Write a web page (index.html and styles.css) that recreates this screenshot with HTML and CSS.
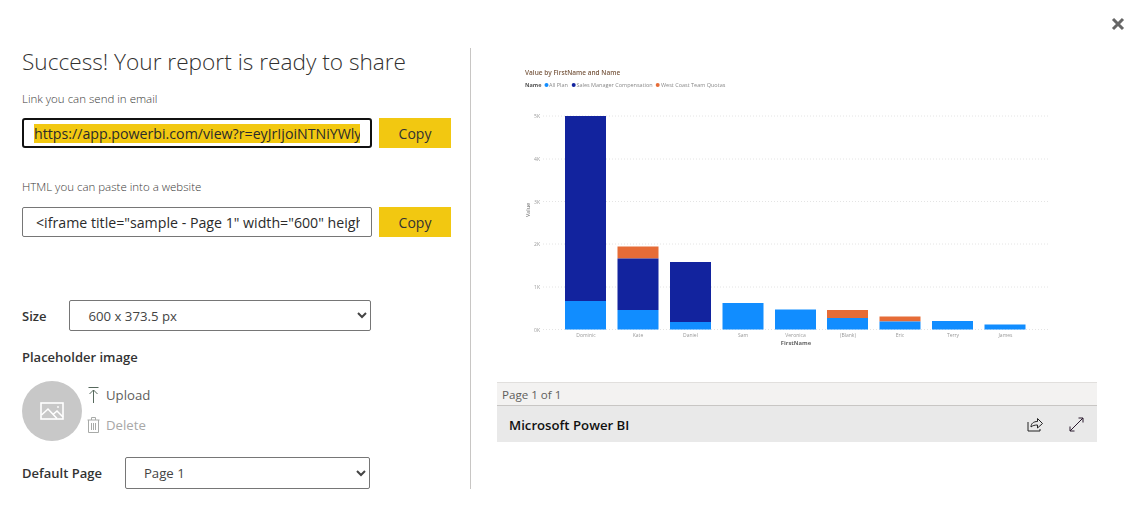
FILE: index.html
```html
<!DOCTYPE html>
<html lang="en">
<head>
    <meta charset="UTF-8">
    <meta name="viewport" content="width=device-width, initial-scale=1.0">
    <title>Share report</title>
    <link rel="stylesheet" href="styles.css">
</head>
<body>
    <button class="close" aria-label="Close">
        <svg width="14" height="14" viewBox="0 0 14 14"><path d="M2 2l10 10M12 2L2 12" stroke="#666" stroke-width="3" fill="none"/></svg>
    </button>
    <div class="dialog">
        <div class="settings">
            <h1>Success! Your report is ready to share</h1>

            <div class="field-label">Link you can send in email</div>
            <div class="copy-row">
                <div class="copy-field focused"><div class="copy-text"><span class="selected">https://app.powerbi.com/view?r=eyJrIjoiNTNiYWlyZ</span></div></div>
                <button class="copy-btn">Copy</button>
            </div>

            <div class="field-label second">HTML you can paste into a website</div>
            <div class="copy-row">
                <div class="copy-field"><div class="copy-text indent">&lt;iframe title="sample - Page 1" width="600" height</div></div>
                <button class="copy-btn">Copy</button>
            </div>

            <div class="select-row size-row">
                <label class="strong">Size</label>
                <select class="size-select"><option>600 x 373.5 px</option></select>
            </div>

            <div class="strong placeholder-title">Placeholder image</div>
            <div class="placeholder">
                <div class="avatar">
                    <svg width="24" height="18" viewBox="0 0 24 18" fill="none" stroke="#fff" stroke-width="1.6">
                        <rect x="1" y="1" width="22" height="16"/>
                        <path d="M1.500 13l6.500-6 9 9.500M13.500 12l3.500-3 6 6"/>
                        <circle cx="18" cy="5" r="0.9" fill="#fff" stroke="none"/>
                    </svg>
                </div>
                <div class="placeholder-actions">
                    <div class="action">
                        <svg width="11" height="17" viewBox="0 0 11 17" fill="none" stroke="#56695d" stroke-width="1"><path d="M.5 .5h10M5.500 16V3M1.500 7l4-4 4 4"/></svg>
                        <span>Upload</span>
                    </div>
                    <div class="action disabled">
                        <svg width="13" height="16" viewBox="0 0 13 16" fill="none" stroke="#a8aaa8" stroke-width="1"><path d="M.5 3h12M4.500 3V.5h4V3M1.500 3v12.500h10V3M4.500 6v7M6.500 6v7M8.500 6v7"/></svg>
                        <span>Delete</span>
                    </div>
                </div>
            </div>

            <div class="select-row page-row">
                <label class="strong">Default Page</label>
                <select class="page-select"><option>Page 1</option></select>
            </div>
        </div>

        <div class="preview">
            <svg class="chart" viewBox="497 60 600 322" width="600" height="322">
                <text class="chart-title" x="525" y="75">Value by FirstName and Name</text>
                <text class="legend-name" x="525" y="87">Name</text>
                <circle cx="546.500" cy="85" r="2" fill="#118dff"/>
                <text class="legend" x="549" y="87">All Plan</text>
                <circle cx="573.700" cy="85" r="2" fill="#12239e"/>
                <text class="legend" x="576.500" y="87">Sales Manager Compensation</text>
                <circle cx="657.700" cy="85" r="2" fill="#e66c37"/>
                <text class="legend" x="661" y="87">West Coast Team Quotas</text>

                <g class="grid">
                    <path d="M543 116H1048M543 159H1048M543 201.500H1048M543 244H1048M543 287H1048M543 329.500H1048"/>
                </g>
                <g class="axis">
                    <text x="540" y="118">5K</text>
                    <text x="540" y="161">4K</text>
                    <text x="540" y="204">3K</text>
                    <text x="540" y="246">2K</text>
                    <text x="540" y="289">1K</text>
                    <text x="540" y="332">0K</text>
                </g>
                <text class="axis-title" transform="translate(529.500 210) rotate(-90)">Value</text>

                <g class="bars">
                    <rect class="navy" x="565" y="116" width="41" height="185"/>
                    <rect class="blue" x="565" y="301" width="41" height="28.500"/>
                    <rect class="orange" x="617.500" y="246.500" width="41" height="12"/>
                    <rect class="navy" x="617.500" y="258.500" width="41" height="51.500"/>
                    <rect class="blue" x="617.500" y="310" width="41" height="19.500"/>
                    <rect class="navy" x="670" y="262" width="41" height="60"/>
                    <rect class="blue" x="670" y="322" width="41" height="7.500"/>
                    <rect class="blue" x="722.500" y="303" width="41" height="26.500"/>
                    <rect class="blue" x="775" y="309.500" width="41" height="20"/>
                    <rect class="orange" x="827" y="310" width="41" height="8"/>
                    <rect class="blue" x="827" y="318" width="41" height="11.500"/>
                    <rect class="orange" x="879.500" y="316.500" width="41" height="5"/>
                    <rect class="blue" x="879.500" y="321.500" width="41" height="8"/>
                    <rect class="blue" x="932" y="321" width="41" height="8.500"/>
                    <rect class="blue" x="984.500" y="324.500" width="41" height="5"/>
                </g>
                <g class="names">
                    <text x="586" y="337">Dominic</text>
                    <text x="638" y="337">Kate</text>
                    <text x="690.500" y="337">Daniel</text>
                    <text x="743" y="337">Sam</text>
                    <text x="795.500" y="337">Veronica</text>
                    <text x="848" y="337">(Blank)</text>
                    <text x="900" y="337">Eric</text>
                    <text x="953" y="337">Terry</text>
                    <text x="1005.500" y="337">James</text>
                </g>
                <text class="axis-name" x="796" y="345">FirstName</text>
            </svg>
            <div class="pager">Page 1 of 1</div>
            <div class="brand-bar">
                <span class="brand">Microsoft Power BI</span>
                <svg class="share" width="17" height="15" viewBox="0 0 17 15" fill="none" stroke="#222" stroke-width="1"><path d="M1 5v9h12v-2"/><path d="M4 10c0-3.500 2.500-5.500 6.500-5.500V1.500l5 5-5 4.500V8C8 8 5.500 8.500 4 10z"/></svg>
                <svg class="expand" width="15" height="15" viewBox="0 0 15 15" fill="none" stroke="#2a1a2e" stroke-width="1"><path d="M1 14L14 1M9.500 1H14v4.500M1 9.500V14h4.500"/></svg>
            </div>
        </div>
    </div>
</body>
</html>
```

FILE: styles.css
```css
html, body {
    margin: 0;
    height: 100%;
}
body {
    font-family: "Open Sans", "Noto Sans", sans-serif;
    background-color: #fff;
    color: #252423;
    overflow: hidden;
}
.close {
    position: absolute;
    top: 17px;
    right: 13px;
    width: 14px;
    height: 14px;
    padding: 0;
    border: none;
    background: none;
}
.close svg {
    display: block;
}
.dialog {
    display: flex;
    padding: 48px 41px 0 22px;
}
.settings {
    width: 429px;
    height: 441px;
    padding-right: 19px;
    border-right: 1px solid #c8c6c4;
}
h1 {
    margin: 0;
    height: 30px;
    font-size: 22.650px;
    line-height: 28px;
    font-weight: 300;
    color: #323130;
    white-space: nowrap;
}
.field-label {
    margin-top: 12px;
    height: 18px;
    font-size: 11.500px;
    line-height: 18px;
    font-weight: 300;
    color: #3b3a39;
}
.field-label.second {
    margin-top: 30px;
    margin-bottom: 11px;
}
.copy-row {
    display: flex;
    gap: 7px;
    margin-top: 10px;
}
.copy-field {
    box-sizing: border-box;
    width: 350px;
    height: 30px;
    padding: 0 11px;
    border: 1px solid #767676;
    border-radius: 2px;
    display: flex;
    align-items: center;
}
.copy-field.focused {
    border: 2px solid #111;
    border-radius: 3px;
    padding: 0 10px;
}
.copy-text {
    overflow: hidden;
    white-space: nowrap;
    font-size: 14.200px;
    line-height: 19px;
    color: #2b2b2b;
    flex: 1;
}
.copy-text.indent {
    padding-left: 2px;
}
.selected {
    background-color: #f2c811;
}
.copy-btn {
    width: 72px;
    height: 30px;
    padding: 0;
    border: none;
    background-color: #f2c811;
    font-family: inherit;
    font-size: 14px;
    color: #333;
}
.strong {
    font-size: 13px;
    font-weight: 600;
    color: #333;
}
.select-row {
    display: flex;
    align-items: center;
}
.select-row select {
    font-family: inherit;
    font-size: 13.200px;
    color: #444;
    background-color: #fff;
    border: 1px solid #767676;
    border-radius: 2px;
    padding-left: 14px;
}
.size-row {
    margin-top: 63px;
    gap: 23px;
}
.size-select {
    width: 302px;
    height: 31px;
}
.placeholder-title {
    margin-top: 16px;
    height: 20px;
    line-height: 20px;
}
.placeholder {
    display: flex;
    gap: 5px;
    margin-top: 14px;
}
.avatar {
    width: 60px;
    height: 60px;
    border-radius: 50%;
    background-color: #c8c8c8;
    display: flex;
    align-items: center;
    justify-content: center;
}
.placeholder-actions {
    display: flex;
    flex-direction: column;
    gap: 10px;
    padding-top: 4px;
}
.action {
    display: flex;
    align-items: center;
    gap: 7px;
    height: 20px;
    padding-left: 1px;
    font-size: 13.200px;
    color: #605e5c;
}
.action.disabled {
    gap: 6px;
    padding-left: 0;
    color: #a8a8a8;
}
.page-row {
    margin-top: 16px;
    gap: 23px;
}
.page-select {
    width: 245px;
    height: 32px;
}
.preview {
    width: 600px;
    margin-left: 26px;
    padding-top: 12px;
}
.chart {
    display: block;
    font-family: "Open Sans", sans-serif;
    filter: blur(0.3px);
}
.chart-title {
    font-size: 6.500px;
    font-weight: 600;
    fill: #7a5a42;
}
.legend-name {
    font-size: 5.500px;
    font-weight: 700;
    fill: #555;
}
.legend {
    font-size: 5.500px;
    fill: #8a8a8a;
}
.grid path {
    stroke: #e4e4e4;
    stroke-width: 1;
    stroke-dasharray: 1 2;
    fill: none;
}
.axis text {
    font-size: 5px;
    text-anchor: end;
    fill: #999;
}
.axis-title {
    font-size: 5.500px;
    text-anchor: middle;
    fill: #666;
}
.navy {
    fill: #12239e;
}
.blue {
    fill: #118dff;
}
.orange {
    fill: #e66c37;
}
.names text {
    font-size: 5px;
    text-anchor: middle;
    fill: #999;
}
.axis-name {
    font-size: 5.800px;
    font-weight: 700;
    text-anchor: middle;
    fill: #666;
}
.pager {
    box-sizing: border-box;
    height: 24px;
    padding-left: 5px;
    background-color: #f3f2f1;
    border-top: 1px solid #e1dfdd;
    border-bottom: 1px solid #c8c6c4;
    font-size: 11.600px;
    line-height: 23px;
    color: #605e5c;
}
.brand-bar {
    display: flex;
    align-items: center;
    height: 36px;
    padding-left: 12px;
    background-color: #e9e9e9;
}
.brand {
    font-size: 13.200px;
    font-weight: 600;
    color: #111;
    flex: 1;
    padding-top: 1px;
}
.share {
    margin-right: 25px;
}
.expand {
    margin-right: 13px;
}
```
